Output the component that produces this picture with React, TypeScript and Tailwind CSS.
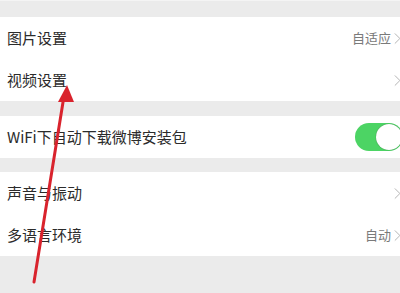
import { ChevronRight } from 'lucide-react';

const font = { fontFamily: '"Noto Sans CJK SC", "Noto Sans", sans-serif' };

const Row = ({ label, value, chevron = true }: { label: string; value?: string; chevron?: boolean }) => (
  <div className="flex h-[42px] items-center justify-between pl-[7px]">
    <span className="text-[15px] text-[#2b2b2b]">{label}</span>
    {chevron && (
      <div className="flex items-center">
        {value && <span className="text-[13px] text-[#7a7a7a]">{value}</span>}
        <ChevronRight size={19} strokeWidth={1.1} className="mr-[-7px] ml-[-3px] text-[#aaaaaa]" />
      </div>
    )}
  </div>
);

export default function App() {
  return (
    <div className="relative h-[293px] w-[400px] overflow-hidden bg-[#ebebeb]" style={font}>
      <div className="h-[17px] border-t border-[#f4f4f4]" />
      <div className="bg-white">
        <Row label="图片设置" value="自适应" />
        <Row label="视频设置" />
      </div>
      <div className="h-[15px]" />
      <div className="flex h-[42px] items-center justify-between bg-white pl-[7px]">
        <span className="text-[15px] text-[#2b2b2b]">WiFi下自动下载微博安装包</span>
        <div className="mr-[-3px] flex h-[28px] w-[48px] items-center justify-end rounded-full bg-[#4cd464] p-[1px]">
          <div className="h-[26px] w-[26px] rounded-full bg-white shadow-[0_0_1px_rgba(0,0,0,0.5)]" />
        </div>
      </div>
      <div className="h-[14px]" />
      <div className="bg-white">
        <Row label="声音与振动" />
        <Row label="多语言环境" value="自动" />
      </div>

      <svg className="absolute left-0 top-0" width="400" height="293" viewBox="0 0 400 293">
        <line x1="34" y1="282" x2="64" y2="96" stroke="#d9232d" strokeWidth="3" strokeLinecap="round" />
        <polygon points="67,85 58,102 74,102" fill="#d9232d" />
      </svg>
    </div>
  );
}
